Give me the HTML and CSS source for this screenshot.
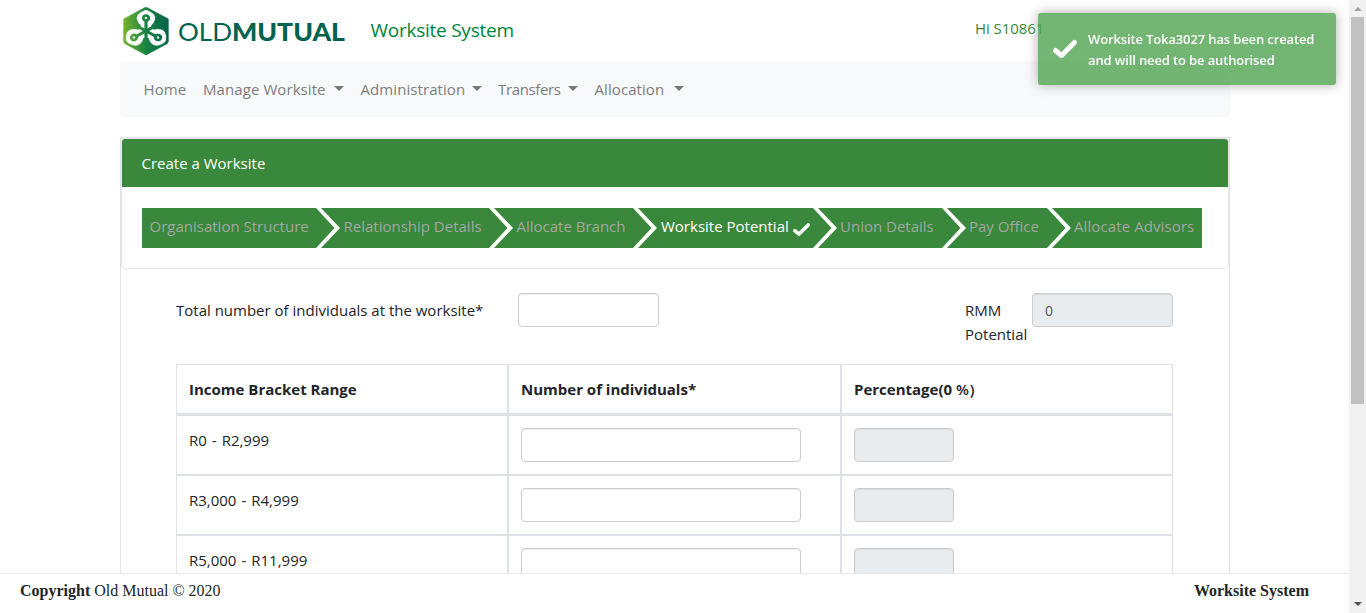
FILE: index.html
```html
<!DOCTYPE html>
<html lang="en">
<head>
<meta charset="utf-8">
<title>Worksite System</title>
<link rel="stylesheet" href="styles.css">
</head>
<body>
<div class="app">
  <div class="view">
    <main class="container">
      <header class="top">
        <svg class="logo" width="226" height="50" viewBox="0 0 226 50">
          <defs>
            <linearGradient id="hex" x1="0" y1="0" x2="1" y2="0">
              <stop offset="0" stop-color="#7fb92c"/>
              <stop offset=".5" stop-color="#188242"/>
              <stop offset="1" stop-color="#00604a"/>
            </linearGradient>
            <g id="anchor">
              <path fill="#fff" stroke="#fff" stroke-width=".6" stroke-linejoin="round" d="M-20 9.500Q-15 14.500-10 15-4.500 15-2 7H2Q4.500 15 10 15 15 14.500 20 9.500V12.500L0 24-20 12.500Z"/>
              <path fill="none" stroke="#fff" stroke-width="3" d="M0-11V10"/>
              <circle cy="-13" r="2.500" fill="none" stroke="#fff" stroke-width="2.600"/>
            </g>
            <mask id="anchors" maskUnits="userSpaceOnUse" x="0" y="0" width="50" height="50">
              <g transform="translate(25 25) scale(1.07 1)">
                <use href="#anchor"/>
                <use href="#anchor" transform="rotate(120)"/>
                <use href="#anchor" transform="rotate(240)"/>
              </g>
            </mask>
          </defs>
          <rect width="50" height="50" fill="url(#hex)" mask="url(#anchors)"/>
          <text class="logo-light" x="57" y="34.500" textLength="54" lengthAdjust="spacingAndGlyphs">OLD</text>
          <text class="logo-bold" x="111" y="34.500" textLength="113" lengthAdjust="spacingAndGlyphs">MUTUAL</text>
        </svg>
        <span class="product">Worksite System</span>
        <span class="user">Hi S10861</span>
      </header>
      <nav class="nav">
        <a class="home">Home</a>
        <a class="manage">Manage Worksite<i class="caret"></i></a>
        <a class="admin">Administration<i class="caret"></i></a>
        <a class="transfers"><span>Transfers</span><i class="caret"></i></a>
        <a class="allocation">Allocation<i class="caret"></i></a>
      </nav>
      <section class="panel">
        <div class="card">
          <h1 class="card-title">Create a Worksite</h1>
          <div class="steps">
            <span class="step s1">Organisation Structure</span><svg class="chev" viewBox="0 0 24 40"><path d="M0 0H5L24 20 5 40H0L18.500 20Z"/></svg>
            <span class="step s2">Relationship Details</span><svg class="chev" viewBox="0 0 24 40"><path d="M0 0H5L24 20 5 40H0L18.500 20Z"/></svg>
            <span class="step s3">Allocate Branch</span><svg class="chev" viewBox="0 0 24 40"><path d="M0 0H5L24 20 5 40H0L18.500 20Z"/></svg>
            <span class="step s4">Worksite Potential<svg class="tick" width="17" height="13" viewBox="0 0 24 18"><path d="M2.500 10.500 8.500 15.500 21.500 2.500"/></svg></span><svg class="chev" viewBox="0 0 24 40"><path d="M0 0H5L24 20 5 40H0L18.500 20Z"/></svg>
            <span class="step s5">Union Details</span><svg class="chev" viewBox="0 0 24 40"><path d="M0 0H5L24 20 5 40H0L18.500 20Z"/></svg>
            <span class="step s6">Pay Office</span><svg class="chev" viewBox="0 0 24 40"><path d="M0 0H5L24 20 5 40H0L18.500 20Z"/></svg>
            <span class="step s7">Allocate Advisors</span>
          </div>
        </div>
        <div class="form">
          <div class="totals">
            <label class="total-label">Total number of individuals at the worksite*</label>
            <input class="field short" type="text">
            <label class="rmm">RMM Potential</label>
            <input class="field short" type="text" value="0" disabled>
          </div>
          <div class="grid">
            <div class="th">Income Bracket Range</div><div class="th">Number of individuals*</div><div class="th">Percentage(0 <span class="pct">%)</span></div>
            <div class="td">R0 - R2,999</div><div class="td"><input class="field wide" type="text"></div><div class="td"><input class="field small" type="text" disabled></div>
            <div class="td">R3,000 - R4,999</div><div class="td"><input class="field wide" type="text"></div><div class="td"><input class="field small" type="text" disabled></div>
            <div class="td">R5,000 - R11,999</div><div class="td"><input class="field wide" type="text"></div><div class="td"><input class="field small" type="text" disabled></div>
          </div>
        </div>
      </section>
    </main>
    <footer class="footer"><span><b>Copyright</b> Old Mutual © 2020</span><b>Worksite System</b></footer>
  </div>
  <div class="scroll"><i class="up"></i><i class="thumb"></i><i class="down"></i></div>
</div>
<div class="toast">
  <svg class="toast-tick" width="24" height="18" viewBox="0 0 24 18"><path d="M2.500 10.500 8.500 15.500 21.500 2.500"/></svg>
  <p>Worksite Toka3027 has been created<br>and will need to be authorised</p>
</div>
</body>
</html>
```

FILE: styles.css
```css
* { box-sizing: border-box; }
body { margin: 0; background: #fff; color: #212529; font: 15px/24px "Open Sans", "Noto Sans", sans-serif; overflow: hidden; }
.app { display: flex; height: 613px; }
.view { flex: 1; display: flex; flex-direction: column; min-width: 0; }
.container { flex: 1; min-height: 0; overflow: hidden; margin-left: 120px; width: 1110px; }
.top { height: 61px; display: flex; align-items: flex-start; padding-top: 6px; white-space: nowrap; }
.logo { margin-left: 1px; flex: none; }
.logo-light, .logo-bold { font-family: Lato, sans-serif; font-size: 25.500px; fill: #006350; }
.logo-bold { font-weight: 900; }
.product { margin: 12px 0 0 23.500px; width: 604.500px; font-size: 19px; letter-spacing: -.25px; color: #00843d; }
.user { margin-top: 10px; color: #3a873b; letter-spacing: -.05px; }
.nav { height: 56px; background: #f8f9fa; border-radius: 4px; display: flex; padding: 16px 0 0 23.500px; color: #7d7e7f; white-space: nowrap; letter-spacing: .08px; }
.nav a { display: flex; align-items: center; justify-content: space-between; height: 24px; margin-right: 16.500px; }
.home { width: 43px; }
.manage { width: 141px; }
.admin { width: 121px; }
.transfers { width: 80px; }
.transfers span { letter-spacing: -.35px; }
.allocation { width: 89px; }
.caret { border: 5px solid transparent; border-top-color: #77787a; border-bottom: 0; margin-top: -2px; }
.panel { margin-top: 20px; border: 1px solid #dee2e6; height: 600px; }
.card { border: 1px solid #e6e7e8; border-radius: 4px; height: 131px; }
.card-title { margin: 0; height: 48px; background: #39883b; border-radius: 3px 3px 0 0; color: #fff; font-size: 15px; font-weight: 400; line-height: 48px; padding-left: 19.500px; }
.steps { margin: 21px 0 0 20px; width: 1060px; height: 40px; display: flex; background: #39883b; color: #a3a7a3; line-height: 37px; white-space: nowrap; }
.step { flex: none; padding-left: 3.500px; }
.s1 { width: 174px; padding-left: 7.500px; }
.s2 { width: 149px; }
.s3 { width: 120px; }
.s4 { width: 155.500px; color: #fff; padding-left: 4px; }
.s5 { width: 105px; }
.s6 { width: 81px; }
.s7 { width: 130px; letter-spacing: .1px; }
.chev { flex: none; width: 24px; height: 40px; fill: #fff; }
.tick, .toast-tick { fill: none; stroke: #fff; stroke-width: 5; stroke-linecap: round; stroke-linejoin: round; overflow: visible; }
.tick { margin-left: 4px; vertical-align: -4px; }
.form { padding: 24px 0 0 55px; }
.totals { display: flex; align-items: flex-start; height: 71px; }
.total-label { width: 342px; padding-top: 5px; }
.rmm { width: 67px; margin-left: 306px; padding-top: 5px; }
.field { display: block; height: 34px; border: 1px solid #ccc; border-radius: 4px; padding: 0 12px; font: 14px "Open Sans", sans-serif; color: #555; background: #fff; box-shadow: inset 0 1px 1px rgba(0,0,0,.075); }
.field:disabled { background: #e9ecef; }
.short { width: 141px; }
.wide { width: 280px; }
.small { width: 100px; }
.grid { display: grid; grid-template-columns: 332px 333px 332px; grid-template-rows: 51px repeat(3, 60px); }
.th, .td { border: 1px solid #dee2e6; padding: 12px; }
.td { word-spacing: 1.100px; }
.th { border-bottom-width: 2px; font-weight: 700; }
.pct { font-weight: 600; letter-spacing: .8px; }
.footer { height: 40px; border-top: 1px solid #e7eaec; background: #fff; display: flex; justify-content: space-between; padding: 5px 40px 0 20px; font: 16px/24px "Liberation Serif", serif; }
.scroll { width: 17px; background: #f1f1f1; display: flex; flex-direction: column; align-items: center; }
.up { border: 4px solid transparent; border-bottom-color: #a3a3a3; border-top: 0; margin: 7px 0 6px; }
.thumb { width: 13px; height: 387px; background: #c1c1c1; }
.down { border: 4px solid transparent; border-top-color: #505050; border-bottom: 0; margin-top: auto; margin-bottom: 7px; }
.toast { position: absolute; left: 1038px; top: 13px; width: 298px; height: 72px; border-radius: 3px; background: #51a351; opacity: .8; box-shadow: 0 0 12px #999; color: #fff; display: flex; align-items: center; padding-left: 15px; white-space: nowrap; font-size: 13px; letter-spacing: -.13px; font-weight: 600; line-height: 21px; }
.toast p { margin: 2px 0 0 11px; }
```
